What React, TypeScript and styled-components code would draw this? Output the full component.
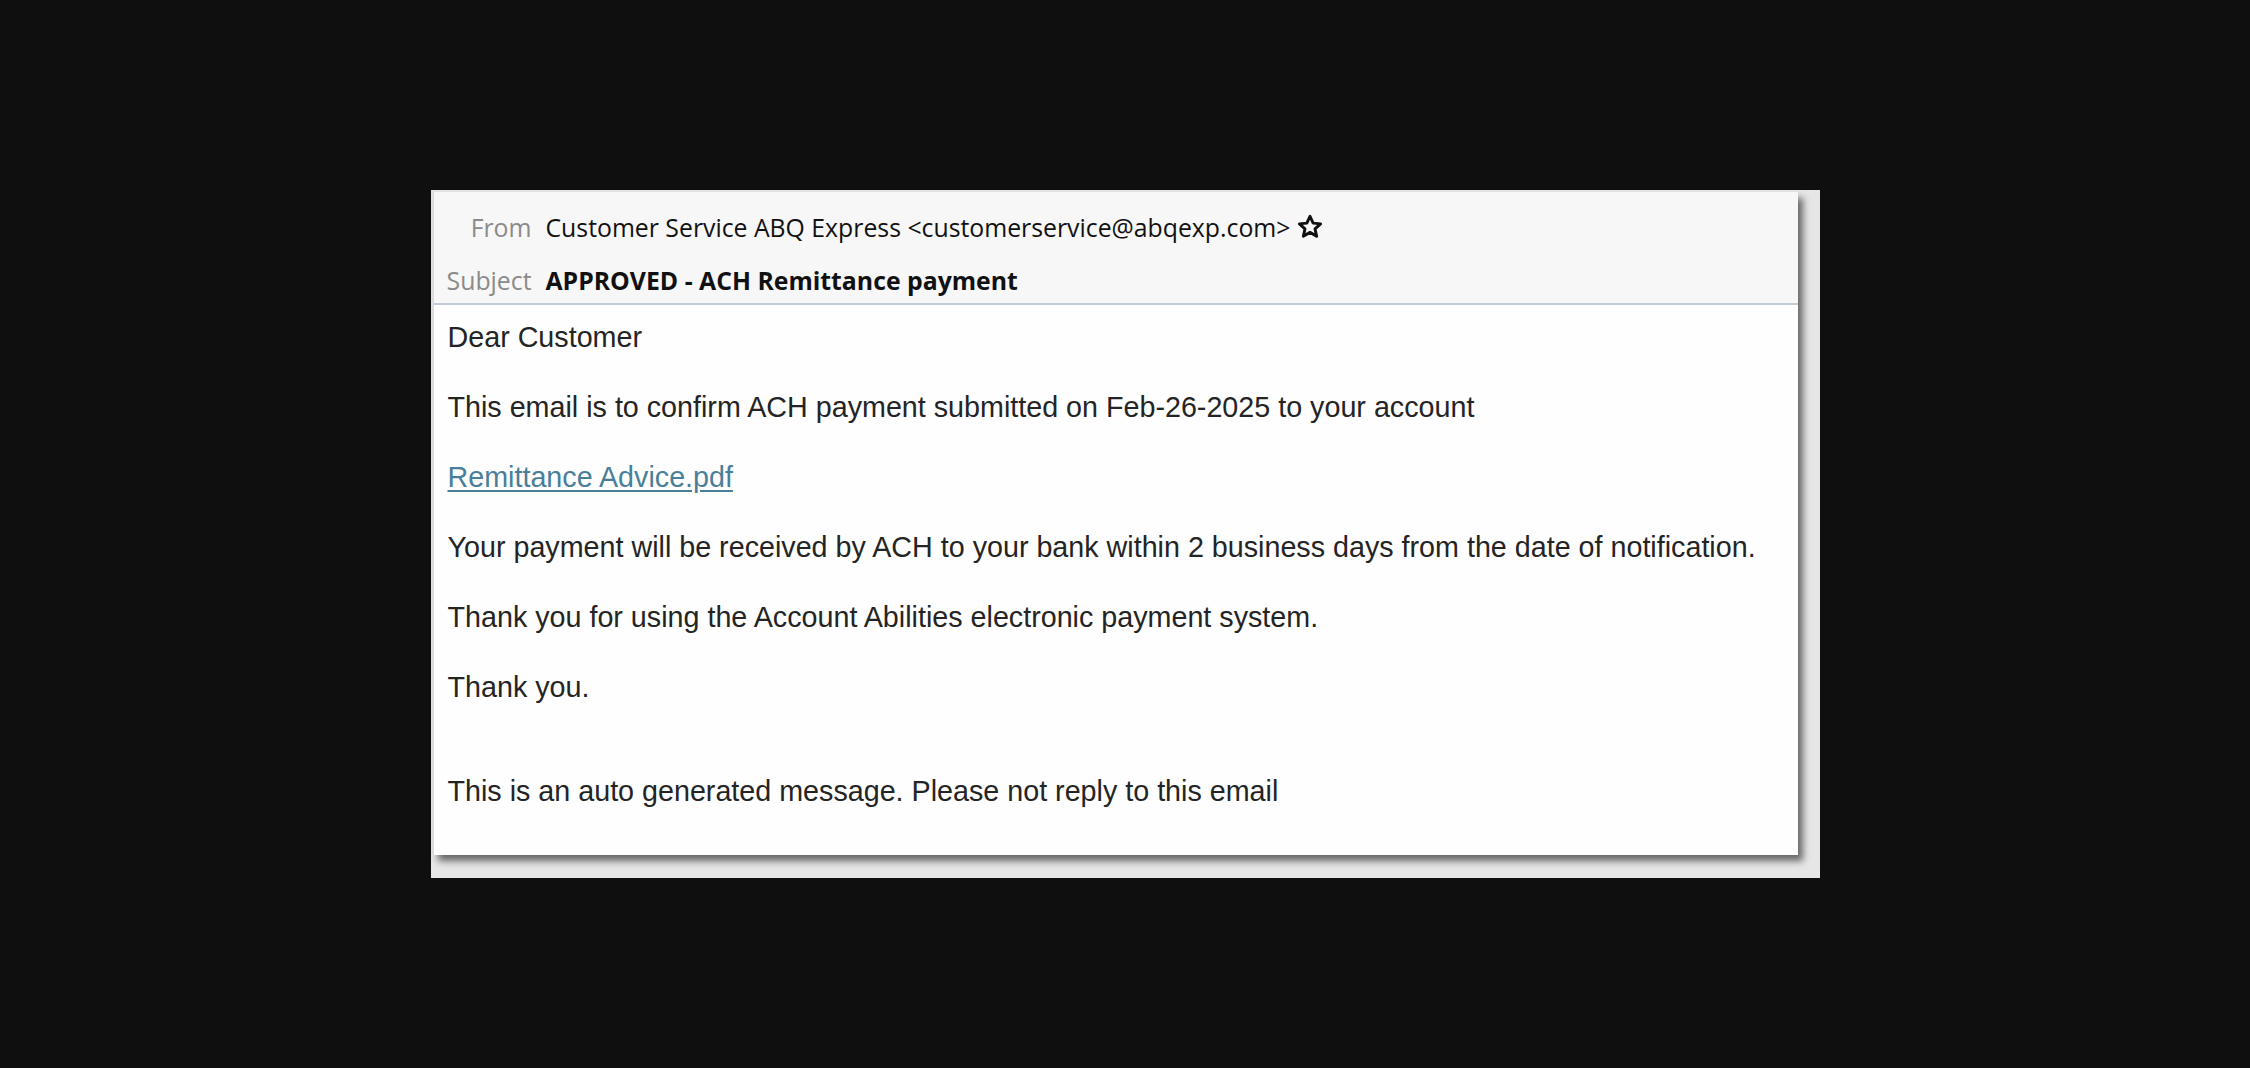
import React from "react";
import styled, { createGlobalStyle } from "styled-components";

const Global = createGlobalStyle`
  html, body { margin: 0; padding: 0; background: #0f0f0f; }
  #root { width: 2250px; height: 1068px; }
`;

const Page = styled.div`
  width: 2250px;
  height: 1068px;
  display: flex;
  align-items: center;
  justify-content: center;
  background: #0f0f0f;
`;

const Frame = styled.div`
  width: 1389px;
  height: 688px;
  box-sizing: border-box;
  background: #e6e6e6;
  padding: 2px 22px 23px 2px;
  display: flex;
`;

const Card = styled.div`
  flex: 1;
  background: #fefefe;
  border-left: 1px solid #d8d8d8;
  box-shadow: 5px 6px 7px rgba(0, 0, 0, 0.55);
  display: flex;
  flex-direction: column;
`;

const Header = styled.div`
  background: #f7f7f7;
  border-bottom: 2px solid #c3ccd6;
  height: 113px;
  box-sizing: border-box;
  padding-top: 18px;
  display: grid;
  grid-template-columns: 98px auto;
  column-gap: 14px;
  row-gap: 19px;
  align-content: start;
  font-family: "Open Sans", "Noto Sans", sans-serif;
  font-size: 24.8px;
  line-height: 34px;
`;

const Label = styled.div`
  color: #8a8a8a;
  text-align: right;
`;

const Value = styled.div<{ $bold?: boolean }>`
  color: #111;
  font-weight: ${(p) => (p.$bold ? 700 : 400)};
  display: flex;
  align-items: center;
  gap: 6px;
`;

const Body = styled.div`
  padding: 12px 0 0 14px;
  font-family: "Liberation Sans", Arial, sans-serif;
  font-size: 28.7px;
  line-height: 40px;
  color: #242424;
  display: flex;
  flex-direction: column;
  gap: 30px;
`;

const Line = styled.div<{ $extra?: boolean }>`
  margin-top: ${(p) => (p.$extra ? "34px" : "0")};
  white-space: nowrap;
`;

const Link = styled.a`
  color: #4a7f99;
  text-decoration: underline;
  text-underline-offset: 3px;
`;

const Star = () => (
  <svg width="28" height="28" viewBox="0 0 24 24" fill="none" stroke="#111" strokeWidth="2.5" strokeLinejoin="round">
    <path d="M12 2.8l2.7 5.9 6.4.6-4.8 4.3 1.4 6.3L12 16.6l-5.7 3.3 1.4-6.3-4.8-4.3 6.4-.6z" />
  </svg>
);

export default function App() {
  return (
    <Page>
      <Global />
      <Frame>
        <Card>
          <Header>
            <Label>From</Label>
            <Value>
              Customer Service ABQ Express &lt;customerservice@abqexp.com&gt;
              <Star />
            </Value>
            <Label>Subject</Label>
            <Value $bold>APPROVED - ACH Remittance payment</Value>
          </Header>
          <Body>
            <Line>Dear Customer</Line>
            <Line>This email is to confirm ACH payment submitted on Feb-26-2025 to your account</Line>
            <Line>
              <Link href="#">Remittance Advice.pdf</Link>
            </Line>
            <Line>Your payment will be received by ACH to your bank within 2 business days from the date of notification.</Line>
            <Line>Thank you for using the Account Abilities electronic payment system.</Line>
            <Line>Thank you.</Line>
            <Line $extra>This is an auto generated message. Please not reply to this email</Line>
          </Body>
        </Card>
      </Frame>
    </Page>
  );
}
